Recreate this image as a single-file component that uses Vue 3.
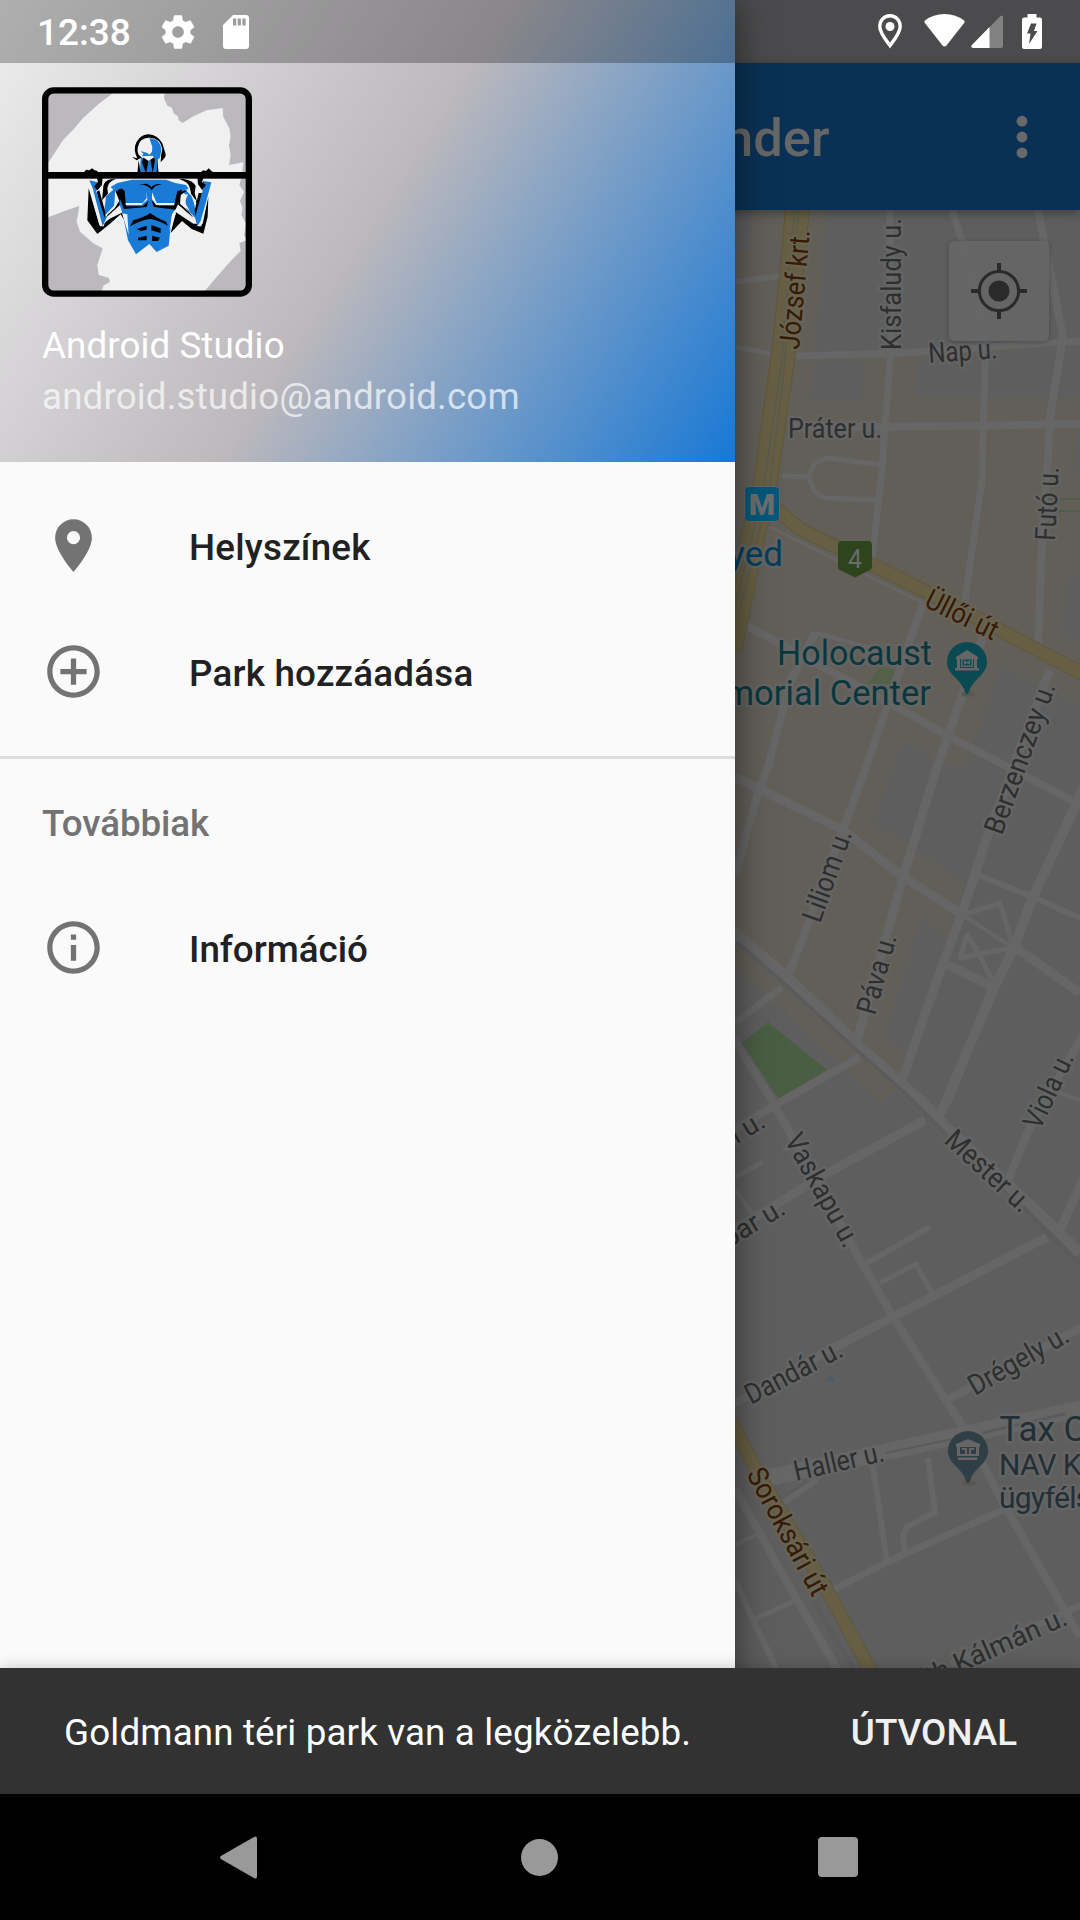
<script setup>
const beige = '735,210 1080,210 1080,705 1000,665 966,770 945,763 903,740 895,760 873,823 917,850 965,885 948,935 920,918 885,1037 905,1055 915,1065 900,1085 882,1103 735,967'
const blocks = [
  '735,210 753,210 751,250 735,251',
  '828,210 1080,210 1080,345 905,353 815,352',
  '814,360 864,360 862,400 810,400',
  '917,358 1080,345 1080,398 914,398',
  '1076,430 1080,430 1080,472 1073,472',
  '1067,577 1080,577 1080,640 1064,636',
]
const roads = [
  [8, '790,427 870,427 1080,424'],
  [7, '795,356 905,353 1000,346 1080,341'],
  [5, '735,347 772,354'],
  [6, '735,282 780,276'],
  [7, '890,210 891,350 885,425 882,470 872,560'],
  [7, '952,210 965,250 987,343 985,363 982,480 965,600'],
  [8, '1038,210 1063,337 1050,417 1048,460 1042,543 1038,647'],
  [5, '782,476 808,477 815,463 827,458 883,465'],
  [5, '808,477 815,492 825,498 878,500'],
  [3, '770,527 923,603'],
  [8, '742,623 893,705 950,737 1008,767 1075,802'],
  [8, '923,603 887,707 865,770 843,830 788,977'],
  [8, '815,633 790,683 768,767 758,793 735,875'],
  [4, '815,633 878,650'],
  [9, '983,637 937,767 903,877 857,1040'],
  [9, '1050,670 987,837 962,913 943,963 902,1080'],
  [9, '735,777 843,830 903,877 960,913'],
  [10, '1085,785 1033,897 1013,950 993,990 947,1100 938,1118'],
  [6, '978,875 1033,897 1080,918'],
  [9, '942,962 993,987'],
  [9, '1015,947 1080,993'],
  [5, '963,915 1000,903 1012,943'],
  [4, '963,915 1010,946'],
  [5, '1010,948 960,958 967,935 977,950 992,980'],
  [11, '730,929 788,978 860,1047 920,1100 947,1128 1060,1233 1080,1253'],
  [7, '735,1023 782,987'],
  [8, '860,1057 780,1102 735,1129'],
  [8, '733,1038 770,1097 853,1247 893,1317 963,1427 1007,1510 1070,1620 1080,1636'],
  [9, '925,1120 820,1177 763,1213 735,1228'],
  [4, '783,1150 800,1143'],
  [5, '735,1177 763,1162'],
  [4, '735,1190 752,1213'],
  [6, '867,1263 930,1227'],
  [5, '880,1283 916,1264 932,1293'],
  [9, '1047,1237 893,1317 833,1348 735,1403'],
  [9, '1085,1175 1060,1230'],
  [8, '1083,1035 1030,1127 1008,1180'],
  [4, '1060,1093 1080,1100'],
  [8, '1082,1327 947,1400'],
  [17, '768,1478 953,1437 1085,1408'],
  [6, '873,1467 887,1562'],
  [6, '928,1458 935,1512 907,1527 903,1535 905,1552'],
  [7, '833,1590 887,1562 1003,1510'],
  [7, '950,1664 1067,1612 1082,1604'],
  [8, '735,1489 797,1600 838,1670'],
  [4, '735,1545 760,1533'],
  [5, '752,1620 797,1600'],
  [6, '735,1580 753,1620 777,1670'],
  [6, '778,1506 817,1480'],
]
const rails = [
  [3, '737,942 783,982 860,1053 900,1088 947,1135'],
  [4, '1023,1207 1080,1265'],
  [2, '885,1453 953,1439'],
  [3, '982,1433 1065,1414'],
  [2, '782,1499 805,1482'],
  [4, '813,1601 855,1670'],
]
const labels = [
  ['József krt.', 799, 350, -84.8, 120, 'hw'],
  ['Kisfaludy u.', 901, 350, -90, 132, ''],
  ['Nap u.', 929, 363, -4, 69, ''],
  ['Práter u.', 788, 438, 0, 94, ''],
  ['Futó u.', 1055, 541, -87, 74, ''],
  ['Üllői út', 923, 606, 26.5, 78, 'hw'],
  ['Berzenczey u.', 1002, 836, -70.2, 159, ''],
  ['Liliom u.', 820, 924, -70.3, 96, ''],
  ['Páva u.', 875, 1016, -74.5, 82, ''],
  ['Viola u.', 1040, 1131, -64.7, 81, ''],
  ['Mester u.', 943, 1142, 42.6, 106, ''],
  ['Vaskapu u.', 784, 1140, 61, 125, ''],
  ['Dandár u.', 751, 1405, -27.8, 106, ''],
  ['Drégely u.', 975, 1396, -29.9, 111, ''],
  ['Haller u.', 796, 1481, -12.7, 92, ''],
  ['Soroksári út', 746, 1474, 61.7, 141, 'hw'],
]
const endLabels = [
  ['al u.', 767, 1126, -31],
  ['par u.', 787, 1213, -31],
  ['th Kálmán u.', 1069, 1624, -24],
]
</script>

<template>
  <div class="screen">
    <div class="stage">
      <div class="app">
        <div class="status-space"></div>
        <header class="toolbar">
          <h1>nder</h1>
          <svg class="more" width="12" height="44" viewBox="0 0 12 44"><g fill="#696969"><circle cx="6" cy="6.2" r="5.4" /><circle cx="6" cy="22" r="5.4" /><circle cx="6" cy="37.8" r="5.4" /></g></svg>
        </header>
        <div class="map-wrap">
          <svg class="map" viewBox="735 210 345 1458" width="345" height="1458">
            <rect x="735" y="210" width="345" height="1458" fill="#5e5e5e" />
            <polygon :points="beige" fill="#625f58" />
            <polygon v-for="b in blocks" :key="b" :points="b" fill="#5e5e5e" />
            <polygon points="768,1022 827,1070 779,1099 742,1043" fill="#4a5e44" />
            <polyline points="757,1081 771,1104" stroke="#4a5e44" stroke-width="1.5" />
            <polygon points="868,683 880,667 897,670 888,688" fill="#556049" />
            <g fill="none" stroke="#666666" stroke-linejoin="round">
              <polyline v-for="r in roads" :key="r[1]" :points="r[1]" :stroke-width="r[0]" />
            </g>
            <g fill="none" stroke="#595b5c">
              <polyline v-for="r in rails" :key="r[1]" :points="r[1]" :stroke-width="r[0]" />
            </g>
            <g fill="none" stroke="#5d5539" stroke-linejoin="round">
              <polyline points="798,205 784,350 765,485 750,550 730,650" stroke-width="24.500" />
              <polyline points="768,502 800,529 855,556 937,597 1013,637 1085,675" stroke-width="14" />
              <polyline points="729,1418 760,1477 827,1590 873,1675" stroke-width="14" />
            </g>
            <g fill="none" stroke="#665f43" stroke-linejoin="round">
              <polyline points="798,205 784,350 765,485 750,550 730,650" stroke-width="23" />
              <polyline points="768,502 800,529 855,556 937,597 1013,637 1085,675" stroke-width="12.500" />
              <polyline points="729,1418 760,1477 827,1590 873,1675" stroke-width="12.500" />
            </g>
            <g fill="none" stroke="#5b5a50" stroke-width="1.600">
              <polyline points="795,205 785,320 782,360 764,485 750,545 737,600" />
              <polyline points="799,205 789,320 785,360 770,485 756,545 740,610" />
            </g>
            <path d="M1048 499H1080M1055 511H1080" stroke="#4a5e4c" stroke-width="1.300" />
            <path d="M830.500 1375L835 1381.500H826Z" fill="#4b5d6b" />

            <g class="label">
              <text v-for="l in labels" :key="l[0]" :class="l[5]" :transform="`translate(${l[1]} ${l[2]}) rotate(${l[3]})`" :textLength="l[4]" lengthAdjust="spacingAndGlyphs">{{ l[0] }}</text>
              <text v-for="l in endLabels" :key="l[0]" class="end" :transform="`translate(${l[1]} ${l[2]}) rotate(${l[3]})`">{{ l[0] }}</text>
            </g>
            <g class="poi">
              <text x="783" y="566" text-anchor="end" fill="#003f5f">yed</text>
              <text x="777" y="665" textLength="155" lengthAdjust="spacingAndGlyphs" fill="#08383e">Holocaust</text>
              <text class="memorial" x="931" y="705" text-anchor="end" fill="#08383e">morial Center</text>
              <text x="999.500" y="1441" fill="#222f35">Tax C</text>
              <text class="sub" x="999" y="1475" fill="#222f35">NAV Kö</text>
              <text class="sub" x="999" y="1508" fill="#222f35">ügyféls</text>
            </g>

            <rect x="744" y="486" width="36" height="36" rx="6" fill="#666" />
            <rect x="745" y="487" width="34" height="34" rx="4" fill="#04587a" />
            <text x="762" y="515" text-anchor="middle" class="metro">M</text>
            <path d="M842 541h26q4 0 4 4v22q0 2-2 3l-15 7.500-15-7.500q-2-1-2-3v-22q0-4 4-4Z" fill="#2d441c" />
            <text x="855" y="568" text-anchor="middle" class="route">4</text>

            <ellipse cx="968" cy="694" rx="7" ry="3" fill="#5a5751" />
            <path d="M967 642a20 20 0 0 1 20 20c0 12-12 16-17 27q-1 5-3 5t-3-5c-5-11-17-15-17-27a20 20 0 0 1 20-20Z" fill="#0b4a52" />
            <g fill="#666"><path d="M967 650l11 7v2h-22v-2ZM957 659h3v10h-3ZM974 659h3v10h-3ZM955 668h24v2.500h-24Z" /><path d="M961 658h12v9h-12ZM962.500 659.500v6h9v-6Z" fill-rule="evenodd" /><path d="M964 660l2 1.500h2l2-1.500v5l-2-1.500h-2l-2 1.500Z" /></g>
            <ellipse cx="969" cy="1483" rx="7" ry="3" fill="#565656" />
            <path d="M968 1431a20 20 0 0 1 20 20c0 12-12 16-17 27q-1 5-3 5t-3-5c-5-11-17-15-17-27a20 20 0 0 1 20-20Z" fill="#303f46" />
            <path d="M968 1439l12 5v3h-24v-3ZM957 1447h3v9h-3ZM962 1448h5v7h-2v-5h-3ZM969 1448h5v2h-3v5h-2ZM976 1447h3v9h-3ZM958 1454h20v2h-20ZM958 1457.500h19v2.500h-19Z" fill="#666" />
          </svg>
          <button class="locate">
            <svg width="56" height="56" viewBox="0 0 56 56"><circle cx="28" cy="28" r="19.600" fill="none" stroke="#2a2a2a" stroke-width="3" /><circle cx="28" cy="28" r="10.500" fill="#2a2a2a" /><path d="M28 0v8M28 48v8M0 28h8M48 28h8" stroke="#2a2a2a" stroke-width="4" /></svg>
          </button>
        </div>
      </div>

      <aside class="drawer">
        <div class="profile">
          <svg class="avatar" viewBox="36 36 630 630" width="210" height="210">
            <rect x="45" y="45" width="612" height="612" rx="30" fill="#bcb9be" />
            <path d="M54 264L100 194 128 166 160 128 205 88 248 55H404L402 70 412 92 425 98 432 116 444 124 446 136 458 144 490 124 530 106 578 99 580 126 598 160 602 184 597 212 602 240 597 270 640 262 636 300 628 330 642 350 630 378 638 400 634 420 648 446 642 480 650 496 628 504 632 528 600 560 560 606 524 648H216L220 632 240 620 236 608 206 600 202 570 218 520 190 505 150 470 140 440 148 393 110 406 54 427Z" fill="#f0f0f0" />
            <g transform="translate(150 150)">
              <!-- shoulders and arm shadows -->
              <path d="M92 163L108 162Q84 170 82 190L84 206 76 232 66 228 70 184Q72 168 92 163Z" fill="#000" />
              <path d="M298 163L310 162Q340 166 347 184L344 205 352 232 340 236 334 210 330 190Q326 170 298 163Z" fill="#000" />
              <path d="M26 190L22 286 52 327 90 296 122 268 140 298 132 260 92 280 58 300Z" fill="#000" />
              <path d="M385 215L383 275 370 326 335 312 306 288 272 324 288 262 340 296 368 296Z" fill="#000" />
              <path d="M66 226L100 188 124 175 120 250 68 300Z" fill="#f0f0f0" />
              <path d="M348 226L318 188 296 175 300 250 350 296Z" fill="#f0f0f0" />
              <path d="M76 232L78 214 98 196 106 190 104 224 102 242 70 276Z" fill="#1a7bd6" />
              <path d="M342 234L334 212 318 196 304 190 316 210 318 250 352 286Z" fill="#1a7bd6" />
              <path d="M104 192L122 202 124 236 76 280 84 268 104 250 118 228Z" fill="#000" />
              <path d="M322 196L296 200 292 236 340 278 328 262 300 236 302 210Z" fill="#000" />
              <path d="M302 210L324 208 314 232 330 258 304 238Z" fill="#f0f0f0" />
              <!-- torso -->
              <path d="M92 186L112 174 156 164H258L286 174 318 180 326 192 304 198 294 240 276 268 266 362 230 381 208 357 168 388 144 346 128 266 118 236 122 204 100 194Z" fill="#1a7bd6" />
              <path d="M112 196Q124 184 134 198L138 244H188L206 228 200 246 132 252 120 222Z" fill="#000" />
              <path d="M306 194L292 198 282 242H236L214 226 222 246 286 254 298 228Z" fill="#000" />
              <path d="M192 177Q204 174 214 187 226 174 246 178 224 180 215 196 206 180 176 177Z" fill="#000" />
              <path d="M200 196V220L188 234H136L138 240H184L202 224ZM216 202L230 234H284L282 240H228L216 222Z" fill="#f0f0f0" />
              <path d="M126 265L142 268 146 330ZM288 265L276 270 268 318Z" fill="#f0f0f0" />
              <path d="M150 304L160 286Q196 276 210 264 232 280 258 290L264 302Q226 282 210 282 184 284 150 304Z" fill="#000" />
              <path d="M170 312L200 302V314L182 318ZM214 300L242 310V324L214 316ZM174 338L200 332V346H174ZM216 332L240 338 234 348H216Z" fill="#000" />
              <!-- neck and head -->
              <path d="M182 98H234V145H180Z" fill="#1a7bd6" />
              <path d="M176 105L182 145H172ZM190 98H226L218 145 212 106H206L198 145 186 112ZM232 110L236 145H230Z" fill="#000" />
              <path d="M170 60Q172 38 208 36L228 92 206 108 184 94Z" fill="#f0f0f0" />
              <path d="M208 40Q240 40 244 74L240 98 228 108 218 92 186 94 190 86 182 78 202 84 208 89 216 80 217 66Z" fill="#1a7bd6" />
              <path d="M172 100Q158 72 170 50 184 28 206 28 232 29 247 55L254 78Q260 92 254 98L242 112Q242 90 247 72 240 36 206 38 178 38 173 68 170 90 186 97L170 106 156 96Z" fill="#000" />
              <!-- forearms -->
              <path d="M23 166L50 160 58 176 46 192 76 276 72 304 60 304 30 198Z" fill="#f0f0f0" />
              <path d="M28 166L54 172 60 188 48 198 80 278 68 304 46 220 38 190Z" fill="#1a7bd6" />
              <path d="M398 166L372 160 362 176 372 194 346 276 352 304 364 304 384 216Z" fill="#f0f0f0" />
              <path d="M394 172L370 168 362 186 368 198 344 274 352 304 362 288 378 232Z" fill="#1a7bd6" />
              <path d="M50 155H68L66 180 52 196 42 184 54 172ZM352 155H372L366 170 378 180 366 194 354 178ZM12 142L18 134 28 136 36 130 44 136 52 138 54 145H14ZM362 142L370 136 378 138 386 130 392 136 400 142ZM50 200L58 196 76 262 74 280ZM366 204L356 204 344 256 346 274Z" fill="#000" />
            </g>
            <rect x="50" y="291" width="602" height="20" fill="#000" />
            <rect x="45.500" y="46" width="611" height="610" rx="26" fill="none" stroke="#000" stroke-width="19" />
          </svg>
          <div class="name">Android Studio</div>
          <div class="email">android.studio@android.com</div>
        </div>
        <nav>
          <a class="item"><svg viewBox="0 0 24 24"><path d="M12 2C8.130 2 5 5.130 5 9c0 5.250 7 13 7 13s7-7.750 7-13c0-3.870-3.130-7-7-7zm0 9.500a2.500 2.500 0 0 1 0-5 2.500 2.500 0 0 1 0 5z" /></svg><span>Helyszínek</span></a>
          <a class="item"><svg viewBox="0 0 24 24"><path d="M13 7h-2v4H7v2h4v4h2v-4h4v-2h-4V7zm-1-5C6.480 2 2 6.480 2 12s4.480 10 10 10 10-4.480 10-10S17.520 2 12 2zm0 18c-4.410 0-8-3.590-8-8s3.590-8 8-8 8 3.590 8 8-3.590 8-8 8z" /></svg><span>Park hozzáadása</span></a>
          <hr>
          <div class="subhead">Továbbiak</div>
          <a class="item info"><svg viewBox="0 0 24 24"><path d="M11 17h2v-6h-2v6zm1-15C6.480 2 2 6.480 2 12s4.480 10 10 10 10-4.480 10-10S17.520 2 12 2zm0 18c-4.410 0-8-3.590-8-8s3.590-8 8-8 8 3.590 8 8-3.590 8-8 8zM11 9h2V7h-2v2z" /></svg><span>Információ</span></a>
        </nav>
      </aside>

      <div class="status">
        <span class="time">12:38</span>
        <svg class="gear" width="40" height="40" viewBox="0 0 24 24"><path fill="#fff" d="M19.430 12.980c.04-.32.070-.64.070-.98s-.03-.66-.07-.98l2.110-1.650c.19-.15.24-.42.12-.64l-2-3.460c-.12-.22-.39-.3-.61-.22l-2.490 1c-.52-.4-1.080-.73-1.690-.98l-.38-2.650A.488.488 0 0 0 14 2h-4c-.25 0-.46.180-.49.420l-.38 2.650c-.61.250-1.170.590-1.690.980l-2.490-1c-.23-.09-.49 0-.61.220l-2 3.460c-.13.220-.07.490.12.640l2.110 1.650c-.04.320-.07.650-.07.980s.03.660.07.980l-2.110 1.650c-.19.150-.24.420-.12.640l2 3.460c.12.220.39.300.61.220l2.490-1c.52.400 1.080.730 1.690.980l.38 2.650c.03.240.24.420.49.420h4c.25 0 .46-.18.49-.42l.38-2.650c.61-.25 1.170-.59 1.690-.98l2.490 1c.23.090.49 0 .61-.22l2-3.460c.12-.22.070-.49-.12-.64l-2.110-1.650zM12 15.500c-1.930 0-3.500-1.570-3.500-3.500s1.570-3.500 3.500-3.500 3.500 1.570 3.500 3.500-1.570 3.500-3.500 3.500z" /></svg>
        <svg class="sd" width="26" height="34" viewBox="0 0 26 34"><path fill="#fff" fill-rule="evenodd" d="M10 0h13q3 0 3 3v28q0 3-3 3H3q-3 0-3-3V10ZM10 3.500v7h3.200v-7ZM14.700 3.500v7h3.200v-7ZM19.400 3.500v7h3.200v-7Z" /></svg>
        <svg class="loc" width="24" height="35" viewBox="0 0 24 35"><path d="M12 1.800C6 1.800 1.800 6.500 1.800 12.500 1.800 19 8 26 12 31.500 16 26 22.200 19 22.200 12.500 22.200 6.500 18 1.800 12 1.800Z" fill="none" stroke="#fff" stroke-width="3.400" /><circle cx="12" cy="12.500" r="4.500" fill="#fff" /></svg>
        <svg class="wifi" width="41" height="33" viewBox="0 0 41 33"><path fill="#fff" d="M20.500 0Q32 0 40 6.500 41 7.500 40.300 8.800L22.500 31.500Q20.500 33.600 18.500 31.500L.7 8.800Q0 7.500 1 6.500 9 0 20.500 0Z" /></svg>
        <svg class="cell" width="32" height="33" viewBox="0 0 32 33"><path d="M1 30L29.500 1q2.500-1.500 2.500 1V31q0 2-2 2H2q-3-1-1-3Z" fill="#828283" /><path d="M1 30L18.500 12V33H2q-3-1-1-3Z" fill="#fff" /></svg>
        <svg class="bat" width="20" height="35" viewBox="0 0 20 35"><path fill="#fff" d="M5.500 0h9v3.500H18q2 0 2 2V33q0 2-2 2H2q-2 0-2-2V5.500q0-2 2-2h3.500Z" /><path fill="#4c4c4e" d="M9 9.500h5.500L12 17h3.500L7 30l1.500-10.500H5Z" /></svg>
      </div>

      <div class="snackbar"><span>Goldmann téri park van a legközelebb.</span><b>ÚTVONAL</b></div>
    </div>
    <div class="navbar">
      <svg width="37" height="43" viewBox="0 0 37 43"><path d="M.8 20L34 1q3-1.500 3 1.500v38q0 3-3 1.500L.8 23q-1.300-1.500 0-3Z" fill="#999" /></svg>
      <i class="home"></i>
      <i class="recent"></i>
    </div>
  </div>
</template>

<style>
body { margin: 0; background: #000; }
</style>

<style scoped>
.screen { width: 1080px; height: 1920px; display: flex; flex-direction: column; overflow: hidden; background: #000; font-family: Roboto, sans-serif; font-size: 36.75px; }
.stage { position: relative; height: 1794px; overflow: hidden; }
.app { display: flex; flex-direction: column; height: 1794px; isolation: isolate; }
.status-space { height: 63px; background: #4b4b4d; }
.toolbar { box-sizing: border-box; height: 147px; background: #0a3155; display: flex; align-items: center; justify-content: space-between; padding: 0 52px 0 724px; box-shadow: 0 3px 10px rgba(0, 0, 0, .35); position: relative; z-index: 1; }
.toolbar h1 { margin: 3px 0 0; font-size: 52.5px; font-weight: 500; color: #666; line-height: 62px; }
.map-wrap { position: relative; height: 1458px; display: flex; justify-content: flex-end; }
.map { display: block; }
.label text, .poi text { paint-order: stroke; stroke: #666; stroke-opacity: .75; stroke-width: 5px; stroke-linejoin: round; }
.label text { font-size: 28.5px; fill: #2d2f2f; }
.label text.end { font-size: 27.5px; text-anchor: end; letter-spacing: -.15px; }
.label text.hw { fill: #361a04; stroke: #696556; }
.poi text { font-size: 35px; }
.poi text.memorial { font-size: 34.6px; }
.poi text.sub { font-size: 30px; letter-spacing: -.7px; }
.metro { font-size: 30px; font-weight: 900; fill: #6d6d6d; }
.route { font-size: 25px; fill: #6b6b6b; }
.locate { position: absolute; right: 31px; top: 31px; width: 100px; height: 100px; padding: 0; border: 0; border-radius: 5px; background: rgba(102, 102, 102, .8); box-shadow: 0 1px 5px rgba(0, 0, 0, .25); display: flex; align-items: center; justify-content: center; }
.drawer { position: absolute; left: 0; top: 0; width: 735px; height: 1794px; background: #fafafa; box-shadow: 0 0 34px rgba(0, 0, 0, .5); }
.profile { box-sizing: border-box; height: 462px; padding: 87px 42px 0; background: linear-gradient(122.2deg, #eee 0%, #bcb8bc 50%, #1878d5 100%); color: #fff; }
.avatar { display: block; }
.name { margin-top: 27px; line-height: 44px; letter-spacing: .08px; }
.email { margin-top: 7px; line-height: 44px; letter-spacing: .14px; color: rgba(255, 255, 255, .7); }
nav { padding-top: 21px; display: flex; flex-direction: column; }
.item { height: 126px; display: flex; align-items: center; padding-left: 42px; gap: 84px; font-weight: 500; color: #212121; }
.item svg { width: 63px; height: 63px; fill: #737373; margin-bottom: 1px; }
.item span { padding-top: 2px; letter-spacing: .22px; }
.item.info span { letter-spacing: 0; }
hr { width: 100%; height: 3px; margin: 21px 0 0; border: 0; background: #dcdcdc; }
.subhead { height: 126px; line-height: 129px; padding-left: 42px; font-weight: 500; color: #737373; letter-spacing: -.08px; }
.status { position: absolute; left: 0; top: 0; width: 1080px; height: 63px; box-sizing: border-box; display: flex; align-items: center; padding-left: 37px; background: linear-gradient(90deg, rgba(0, 0, 0, .267) 735px, transparent 735px); color: #fff; }
.time { width: 121px; font-size: 37px; font-weight: 500; padding-top: 2px; }
.sd { margin-left: 25px; }
.loc { margin-left: 629px; }
.wifi { margin-left: 22px; margin-top: -3px; }
.cell { margin-left: 6px; }
.bat { margin-left: 19px; }
.snackbar { position: absolute; left: 0; top: 1668px; width: 1080px; height: 126px; box-sizing: border-box; padding: 2px 63px 0 64px; display: flex; align-items: center; justify-content: space-between; background: #323232; color: #fff; box-shadow: 0 0 14px rgba(0, 0, 0, .22); }
.snackbar span { letter-spacing: .15px; }
.snackbar b { font-weight: 500; color: #f0f0f0; }
.navbar { height: 126px; display: flex; align-items: center; background: #000; padding-left: 220px; }
.home { width: 37px; height: 37px; border-radius: 50%; background: #999; margin-left: 264px; }
.recent { width: 40px; height: 40px; border-radius: 4px; background: #999; margin-left: 260px; }
</style>
